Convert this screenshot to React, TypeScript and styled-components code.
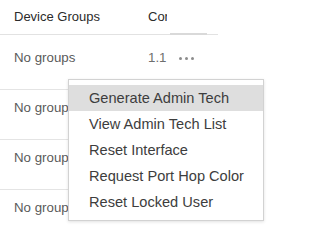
import React from 'react';
import styled, { createGlobalStyle } from 'styled-components';

const GlobalStyle = createGlobalStyle`
  html, body {
    margin: 0;
    padding: 0;
    background: #ffffff;
  }
  body {
    font-family: 'Liberation Sans', Arial, sans-serif;
  }
`;

type DeviceRow = {
  groups: string;
  config: string;
};

const rows: DeviceRow[] = [
  { groups: 'No groups', config: '1.1' },
  { groups: 'No groups', config: '1.1' },
  { groups: 'No groups', config: '1.1' },
  { groups: 'No groups', config: '1.1' },
];

const menuItems = [
  'Generate Admin Tech',
  'View Admin Tech List',
  'Reset Interface',
  'Request Port Hop Color',
  'Reset Locked User',
];

const App = () => {
  return (
    <>
      <GlobalStyle />
      <Page>
        <Table>
          <HeadRow>
            <GroupCell>
              <HeadText>Device Groups</HeadText>
            </GroupCell>
            <ConfigCell>
              <HeadText>Config Group</HeadText>
            </ConfigCell>
            <ActionHead>
              <Shade />
            </ActionHead>
          </HeadRow>
          {rows.map((row, i) => (
            <BodyRow key={i} $first={i === 0}>
              <GroupCell>
                <CellText>{row.groups}</CellText>
              </GroupCell>
              <ConfigCell>
                <ConfigText>{row.config}</ConfigText>
              </ConfigCell>
              <ActionCell>
                {i === 0 && (
                  <MoreButton aria-label='more'>
                    <Dot />
                    <Dot />
                    <Dot />
                  </MoreButton>
                )}
              </ActionCell>
            </BodyRow>
          ))}
        </Table>
        <Menu>
          {menuItems.map((item, i) => (
            <MenuItem key={item} $active={i === 0}>
              {item}
            </MenuItem>
          ))}
        </Menu>
      </Page>
    </>
  );
};
export default App;

const Page = styled.div`
  position: relative;
  width: 269px;
  height: 234px;
  overflow: hidden;
  background: #ffffff;
`;

const Table = styled.div`
  width: 218px;
  display: flex;
  flex-direction: column;
`;

const HeadRow = styled.div`
  display: flex;
  height: 35px;
  box-sizing: border-box;
  border-bottom: 1px solid #e2e2e2;
`;

const BodyRow = styled.div<{ $first?: boolean }>`
  display: flex;
  box-sizing: border-box;
  height: ${(p) => (p.$first ? '55px' : '50px')};
  padding-top: ${(p) => (p.$first ? '15px' : '10px')};
  border-bottom: 1px solid #e4e4e4;
`;

const GroupCell = styled.div`
  width: 148px;
  padding-left: 14px;
  box-sizing: border-box;
  display: flex;
  align-items: flex-start;
`;

const ConfigCell = styled.div`
  width: 19px;
  overflow: hidden;
  white-space: nowrap;
  display: flex;
  align-items: flex-start;
`;

const ActionHead = styled.div`
  flex: 1;
  display: flex;
  align-items: flex-end;
  padding-left: 3px;
`;

const Shade = styled.div`
  width: 37px;
  height: 2px;
  background: #d9d9d9;
  margin-bottom: -1px;
`;

const ActionCell = styled.div`
  flex: 1;
  display: flex;
  align-items: flex-start;
  padding-left: 12px;
`;

const HeadText = styled.span`
  font-size: 13px;
  line-height: 34px;
  color: #2b2b2b;
`;

const CellText = styled.span`
  font-size: 13.3px;
  line-height: 16px;
  color: #5a5a5a;
  white-space: nowrap;
`;

const ConfigText = styled(CellText)`
  color: #6e6e6e;
`;

const MoreButton = styled.button`
  display: flex;
  align-items: center;
  gap: 3px;
  height: 16px;
  padding: 0;
  border: none;
  background: transparent;
`;

const Dot = styled.span`
  width: 3px;
  height: 3px;
  border-radius: 50%;
  background: #8c8c8c;
`;

const Menu = styled.div`
  position: absolute;
  left: 68px;
  top: 79px;
  width: 196px;
  height: 142px;
  box-sizing: border-box;
  border: 1px solid #d2d2d2;
  background: #ffffff;
  box-shadow: 0 1px 3px rgba(0, 0, 0, 0.12);
  padding: 5px 0 4px;
  display: flex;
  flex-direction: column;
`;

const MenuItem = styled.div<{ $active?: boolean }>`
  height: 26px;
  line-height: 26px;
  padding-left: 20px;
  font-size: 14.6px;
  color: #3d3d3d;
  white-space: nowrap;
  background: ${(p) => (p.$active ? '#dedede' : 'transparent')};
`;
